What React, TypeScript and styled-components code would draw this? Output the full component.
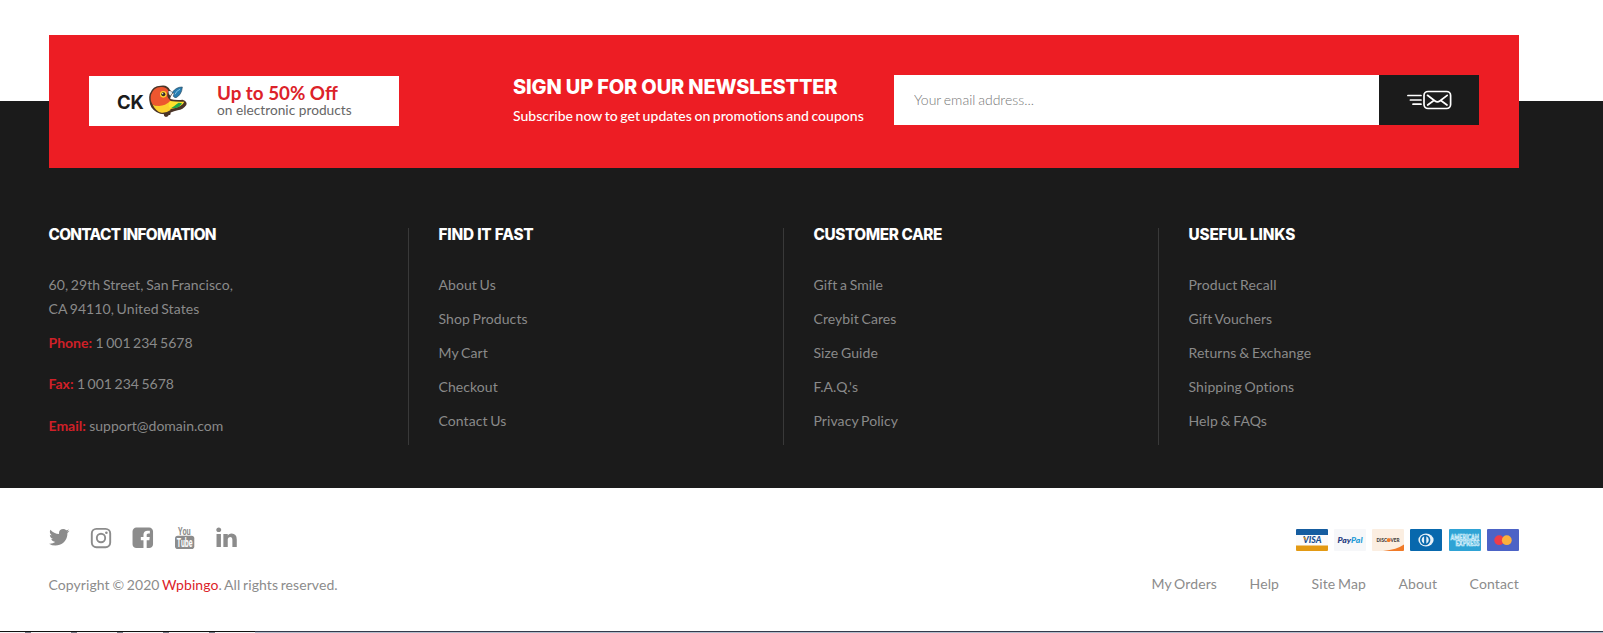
import React from 'react';
import styled, { createGlobalStyle } from 'styled-components';

const GlobalStyle = createGlobalStyle`
  * { box-sizing: border-box; }
  body { margin: 0; background: #fff; overflow: hidden; }
  ul, h2, h3, p { margin: 0; padding: 0; list-style: none; }
  a { color: inherit; text-decoration: none; }
`;

const Page = styled.div`
  display: flex;
  flex-direction: column;
  height: 633px;
  padding-top: 101px;
  font: 400 14px/24px Lato, sans-serif;
  letter-spacing: 0.08px;
  word-spacing: -1px;
  color: #8a8a8a;
`;

const FooterMain = styled.section`
  display: flex;
  flex-direction: column;
  height: 387px;
  flex: none;
  padding-right: 84px;
  background: #1b1b1b;
`;

const Newsletter = styled.div`
  display: flex;
  align-items: flex-start;
  height: 133px;
  flex: none;
  margin: -66px 0 60px 49px;
  padding: 40px 40px 0;
  background: #ed1d24;
`;

const Promo = styled.a`
  display: flex;
  align-items: center;
  width: 310px;
  height: 50px;
  margin: 1px 114px 0 0;
  padding-left: 28px;
  background: #fff;
`;

const PromoBrand = styled.span`
  width: 31px;
  padding-top: 2px;
  font: 700 18.5px/24px Inter, sans-serif;
  letter-spacing: -0.1px;
  color: #1b1b1b;
`;

const BirdArt = styled.svg`
  width: 40px;
  height: 35px;
`;

const PromoText = styled.div`
  display: flex;
  flex-direction: column;
  margin-left: 29px;
  word-spacing: 0;
`;

const PromoTitle = styled.strong`
  font: 700 18.8px/18px Lato, sans-serif;
  letter-spacing: 0;
  color: #dc2229;
`;

const PromoNote = styled.span`
  font-size: 13.7px;
  line-height: 16px;
  letter-spacing: 0.02px;
  color: #666;
`;

const Signup = styled.div`
  width: 381px;
  color: #fff;
`;

const SignupTitle = styled.h2`
  margin-bottom: 5px;
  font: 800 20px/24px Inter, sans-serif;
  letter-spacing: -0.17px;
  word-spacing: 0;
  white-space: nowrap;
`;

const SignupNote = styled.p`
  font-weight: 500;
  letter-spacing: 0.03px;
  white-space: nowrap;
`;

const Form = styled.form`
  display: flex;
  flex: 1;
  height: 50px;
`;

const EmailInput = styled.input`
  flex: 1;
  min-width: 0;
  padding: 0 20px 2px;
  border: 0;
  background: #fff;
  font: 300 14px Lato, sans-serif;
  letter-spacing: 0;
  word-spacing: -1px;
  &::placeholder { color: #777; opacity: 1; }
`;

const SendButton = styled.button`
  display: grid;
  place-items: center;
  width: 100px;
  padding: 0;
  border: 0;
  background: #1b1b1b;
`;

const Columns = styled.div`
  display: grid;
  grid-template-columns: repeat(4, 375px);
  grid-template-rows: 217px;
  margin-left: 34px;
`;

const Column = styled.div<{ $first?: boolean; $last?: boolean }>`
  padding-left: ${(p) => (p.$first ? '14.5px' : '29.5px')};
  border-right: ${(p) => (p.$last ? 'none' : '1px solid #393939')};
`;

const Heading = styled.h3<{ $tracking: number }>`
  margin-bottom: 31px;
  font: 800 15.3px/14px Inter, sans-serif;
  letter-spacing: ${(p) => p.$tracking}px;
  word-spacing: 0;
  color: #fff;
`;

const LinkList = styled.ul`
  display: flex;
  flex-direction: column;
  gap: 10px;
`;

const Address = styled.p`
  margin-bottom: 10px;
`;

const ContactLine = styled.p<{ $gap: number }>`
  margin-bottom: ${(p) => p.$gap}px;
  letter-spacing: 0;
`;

const Label = styled.span`
  margin-right: 0.8px;
  font-weight: 700;
  color: #cf2028;
`;

const FooterBottom = styled.section`
  display: flex;
  justify-content: space-between;
  height: 143px;
  flex: none;
  padding: 38px 84px 0 48.5px;
  color: #8c8c8c;
`;

const Socials = styled.div`
  display: flex;
  gap: 21.4px;
  margin-bottom: 24px;
  color: #8c8c8c;
`;

const SocialIcon = styled.svg`
  display: block;
  width: 20.5px;
  height: 23px;
  overflow: visible;
  fill: currentColor;
`;

const Brand = styled.a`
  color: #dc2229;
`;

const RightSide = styled.div`
  display: flex;
  flex-direction: column;
  align-items: flex-end;
`;

const Payments = styled.div`
  display: flex;
  gap: 6.3px;
  margin: 3px 0 21px;
`;

const PayCard = styled.svg`
  display: block;
  width: 32px;
  height: 22px;
  overflow: visible;
  font-family: Lato, sans-serif;
  letter-spacing: 0;
  word-spacing: 0;
`;

const BottomNav = styled.nav`
  display: flex;
  gap: 32.5px;
  letter-spacing: 0.12px;
`;

const EdgeTop = styled.div`
  height: 1px;
  flex: none;
  background: linear-gradient(90deg, #111 255px, #343b4c 255px);
`;

const EdgeBottom = styled.div`
  height: 1px;
  flex: none;
  background:
    linear-gradient(90deg, transparent 255px, #b4bccb 255px),
    repeating-linear-gradient(90deg, #f3f3f5 0 25px, #757b88 25px 31px, #f3f3f5 31px 46px);
`;

const Bird = () => (
  <BirdArt viewBox="0 0 120 105" aria-hidden="true">
    <path d="M49 88 Q45 98 54 99 Q62 98 62 93 Q70 94 67 83Z" fill="#4a3428" />
    <path d="M5 30 Q14 5 38 5 Q58 1 66 18 L76 27 Q66 37 67 45 Q82 49 104 47 Q119 52 115 63 Q105 77 89 79 Q77 82 70 85 Q60 92 48 91 Q24 90 10 70 Q0 49 5 30Z" fill="#4a3428" />
    <path d="M9 32 Q17 9 38 9 Q54 7 61 20 Q53 36 65 47 L72 54 Q47 74 14 62 Q5 48 9 32Z" fill="#ed562f" />
    <path d="M14 62 Q44 73 67 51 Q62 65 68 78 Q56 87 41 86 Q24 83 14 62Z" fill="#fcd02e" />
    <path d="M66 51 Q87 54 109 53 Q103 70 66 75 Q58 65 66 51Z" fill="#ffe22d" />
    <path d="M70 72 Q90 57 92 56 L102 58 Q99 66 85 72Z" fill="#22a64a" />
    <path d="M61 22 Q70 19 74 26 L67 35 Q61 31 61 22Z" fill="#e4edf1" />
    <path d="M73 25 Q84 9 103 9 Q101 33 84 41 Q71 39 79 29Z" fill="#287db1" stroke="#27485d" strokeWidth="2" />
    <path d="M81 31 Q86 19 96 16" fill="none" stroke="#7fc5e7" strokeWidth="3" />
    <circle cx="46" cy="31" r="10" fill="#fcd02e" />
    <circle cx="46" cy="31" r="6" fill="#352823" />
    <circle cx="44" cy="29" r="2" fill="#fff" />
  </BirdArt>
);

const SendIcon = () => (
  <svg width="45" height="20" viewBox="0 0 45 20" fill="none" stroke="#fff" strokeWidth="1.7" strokeLinecap="round">
    <path d="M.9 5.500H14M3.400 10H14M6 14.200H14" />
    <rect x="17" y="1.500" width="26.600" height="17" rx="4" />
    <path d="M20.500 5.300 L28 11 Q30.400 12.800 32.800 11 L40.200 5.300M20.700 15 L26.500 10.800M40 15 L34.200 10.800" />
  </svg>
);

const links: [string, number, string[]][] = [
  ['FIND IT FAST', -0.16, ['About Us', 'Shop Products', 'My Cart', 'Checkout', 'Contact Us']],
  ['CUSTOMER CARE', -0.4, ['Gift a Smile', 'Creybit Cares', 'Size Guide', "F.A.Q.'s", 'Privacy Policy']],
  ['USEFUL LINKS', -0.15, ['Product Recall', 'Gift Vouchers', 'Returns & Exchange', 'Shipping Options', 'Help & FAQs']],
];

const navLinks = ['My Orders', 'Help', 'Site Map', 'About', 'Contact'];

const SocialRow = () => (
  <Socials>
    <SocialIcon viewBox="108 34 1576 1768" aria-label="Twitter">
      <path d="M1684 408q-67 98-162 167 1 14 1 42 0 130-38 259.500t-115.500 248.500-184.500 210.500-258 146-323 54.500q-271 0-496-145 35 4 78 4 225 0 401-138-105-2-188-64.500t-114-159.500q33 5 61 5 43 0 85-11-112-23-185.500-111.500t-73.500-205.500v-4q68 38 146 41-66-44-105-115t-39-154q0-88 44-163 121 149 294.500 238.500t371.500 99.500q-8-38-8-74 0-134 94.500-228.500t228.500-94.500q140 0 236 102 109-21 205-78-37 115-142 178 93-10 186-50z" />
    </SocialIcon>
    <SocialIcon viewBox="0 0 20.5 23" aria-label="Instagram">
      <rect x="1.8" y="2.9" width="18.4" height="18.3" rx="4.6" fill="none" stroke="currentColor" strokeWidth="1.9" />
      <circle cx="11" cy="12" r="4.2" fill="none" stroke="currentColor" strokeWidth="1.9" />
      <circle cx="16.4" cy="6.7" r="1.3" />
    </SocialIcon>
    <SocialIcon viewBox="-40 10 1536 1723" aria-label="Facebook">
      <path d="M1248 128q119 0 203.500 84.500t84.500 203.500v960q0 119-84.500 203.500t-203.500 84.500h-188v-595h199l30-232h-229v-148q0-56 23.500-84t91.500-28l122-1v-207q-63-9-178-9-136 0-217.500 80t-81.500 226v171h-200v232h200v595h-532q-119 0-203.500-84.500t-84.500-203.500v-960q0-119 84.500-203.500t203.500-84.500h960z" />
    </SocialIcon>
    <SocialIcon viewBox="0 0 20.5 23" aria-label="YouTube">
      <text x="4" y="8.600" fontFamily="Roboto, sans-serif" fontWeight="700" fontSize="11.500" textLength="12.800" lengthAdjust="spacingAndGlyphs">You</text>
      <rect x="1" y="9.800" width="19.300" height="13.200" rx="2.800" />
      <text x="2.800" y="20.700" fill="#fff" fontFamily="Roboto, sans-serif" fontWeight="700" fontSize="12" textLength="15.800" lengthAdjust="spacingAndGlyphs">Tube</text>
    </SocialIcon>
    <SocialIcon viewBox="-20 34 1536 1723" aria-label="LinkedIn">
      <path d="M349 625v991h-330v-991h330zm21-306q1 73-50.500 122t-135.500 49h-2q-82 0-132-49t-50-122q0-74 51.500-122.500t134.500-48.500 133 48.500 51 122.500zm1166 729v568h-329v-530q0-105-40.500-164.500t-126.500-59.500q-63 0-105.500 34.500t-63.500 85.500q-11 30-11 81v553h-329q2-399 2-647t-1-296l-1-48h329v144h-2q20-32 41-56t56.500-52 87-43.500 114.500-15.500q171 0 275 113.500t104 332.500z" />
    </SocialIcon>
  </Socials>
);

const PaymentRow = () => (
  <Payments>
    <PayCard viewBox="0 0 32 22" aria-label="Visa">
      <rect width="32" height="22" rx="1" fill="#fbfbfc" />
      <path d="M0 6V1q0-1 1-1h30q1 0 1 1v5z" fill="#165da0" />
      <path d="M0 16.500h32V21q0 1-1 1H1q-1 0-1-1z" fill="#e39a14" />
      <text x="7" y="14.400" fontSize="8.500" fontWeight="900" fontStyle="italic" fill="#184f91" textLength="18.500" lengthAdjust="spacingAndGlyphs">VISA</text>
      <path d="M7 8.200h2.400l1 3.500z" fill="#e39a14" />
    </PayCard>
    <PayCard viewBox="0 0 32 22" aria-label="PayPal">
      <rect width="32" height="22" rx="1" fill="#f6f7f9" />
      <text x="3.500" y="13.700" fontSize="8" fontWeight="900" fontStyle="italic" fill="#253b80" textLength="25" lengthAdjust="spacingAndGlyphs">Pay<tspan fill="#1e9bd7">Pal</tspan></text>
    </PayCard>
    <PayCard viewBox="0 0 32 22" aria-label="Discover">
      <rect width="32" height="22" rx="1" fill="#fbeee1" />
      <path d="M11 22Q25 20.500 32 15.500V21q0 1-1 1z" fill="#f07a28" />
      <text x="4.500" y="13" fontSize="5" fontWeight="900" fill="#423b38" textLength="23" lengthAdjust="spacingAndGlyphs">DISC<tspan fill="#f07a28">O</tspan>VER</text>
      <circle cx="16.600" cy="11.300" r="1.800" fill="#f07a28" />
    </PayCard>
    <PayCard viewBox="0 0 32 22" aria-label="Diners Club">
      <rect width="32" height="22" rx="1" fill="#0868ad" />
      <ellipse cx="16" cy="11" rx="7.600" ry="6.500" fill="#e7f1f8" />
      <circle cx="15.200" cy="11" r="5.200" fill="#0868ad" />
      <path d="M14.100 7.300A4 4 0 0 0 14.100 14.700zM16.300 7.300A4 4 0 0 1 16.300 14.700z" fill="#e7f1f8" />
    </PayCard>
    <PayCard viewBox="0 0 32 22" aria-label="American Express">
      <rect width="32" height="22" rx="1" fill="#2fa3d5" />
      <text x="1.500" y="11" fontSize="6.800" fontWeight="700" fill="none" stroke="#d5f0fb" strokeWidth=".65" textLength="28.500" lengthAdjust="spacingAndGlyphs">AMERICAN</text>
      <text x="6.500" y="17.300" fontSize="6.800" fontWeight="700" fill="none" stroke="#d5f0fb" strokeWidth=".65" textLength="24" lengthAdjust="spacingAndGlyphs">EXPRESS</text>
    </PayCard>
    <PayCard viewBox="0 0 32 22" aria-label="Mastercard">
      <rect width="32" height="22" rx="1" fill="#4c63c6" />
      <circle cx="12.200" cy="11.200" r="4.900" fill="#ee3d49" />
      <circle cx="19.800" cy="11.200" r="4.900" fill="#fbb03c" />
    </PayCard>
  </Payments>
);

export default function App() {
  return (
    <Page>
      <GlobalStyle />
      <FooterMain>
        <Newsletter>
          <Promo href="#">
            <PromoBrand>CK</PromoBrand>
            <Bird />
            <PromoText>
              <PromoTitle>Up to 50% Off</PromoTitle>
              <PromoNote>on electronic products</PromoNote>
            </PromoText>
          </Promo>
          <Signup>
            <SignupTitle>SIGN UP FOR OUR NEWSLESTTER</SignupTitle>
            <SignupNote>Subscribe now to get updates on promotions and coupons</SignupNote>
          </Signup>
          <Form>
            <EmailInput type="email" placeholder="Your email address..." />
            <SendButton type="button" aria-label="Subscribe"><SendIcon /></SendButton>
          </Form>
        </Newsletter>
        <Columns>
          <Column $first>
            <Heading $tracking={-0.7}>CONTACT INFOMATION</Heading>
            <Address>60, 29th Street, San Francisco,<br />CA 94110, United States</Address>
            <ContactLine $gap={17}><Label>Phone:</Label> 1 001 234 5678</ContactLine>
            <ContactLine $gap={18}><Label>Fax:</Label> 1 001 234 5678</ContactLine>
            <ContactLine $gap={0}><Label>Email:</Label> support@domain.com</ContactLine>
          </Column>
          {links.map(([title, tracking, items], i) => (
            <Column key={title} $last={i === links.length - 1}>
              <Heading $tracking={tracking}>{title}</Heading>
              <LinkList>
                {items.map((item) => <li key={item}><a href="#">{item}</a></li>)}
              </LinkList>
            </Column>
          ))}
        </Columns>
      </FooterMain>
      <FooterBottom>
        <div>
          <SocialRow />
          <p>Copyright © 2020 <Brand href="#">Wpbingo</Brand>. All rights reserved.</p>
        </div>
        <RightSide>
          <PaymentRow />
          <BottomNav>
            {navLinks.map((item) => <a key={item} href="#">{item}</a>)}
          </BottomNav>
        </RightSide>
      </FooterBottom>
      <EdgeTop />
      <EdgeBottom />
    </Page>
  );
}
